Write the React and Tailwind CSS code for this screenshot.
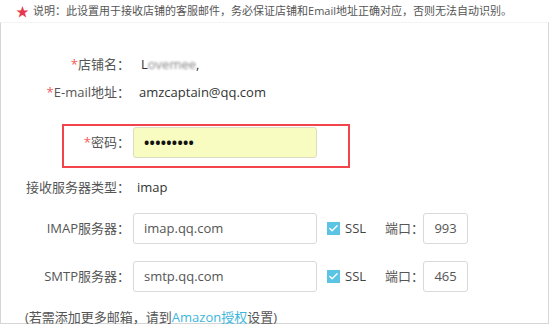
import { Check } from 'lucide-react'

const FONT = { fontFamily: '"Open Sans", "Noto Sans CJK SC", sans-serif' }

function Label({ children, required, width = 'w-[129px]' }) {
  return (
    <div className={`${width} shrink-0 text-right text-[13px] text-[#555] whitespace-nowrap`}>
      {required && <span className="text-[#f35a5a]">*</span>}
      {children}
    </div>
  )
}

function TextBox({ value, className = 'w-[184px]' }) {
  return (
    <div className={`${className} h-[31px] flex items-center px-[10px] border border-[#d9d9d9] rounded-[3px] bg-white text-[13px] text-[#555]`}>
      {value}
    </div>
  )
}

function ServerRow({ label, host, port }) {
  return (
    <div className="flex items-center h-[31px]">
      <Label>{label}</Label>
      <div className="ml-[3px]">
        <TextBox value={host} />
      </div>
      <div className="ml-[10px] w-[13px] h-[13px] bg-[#5bc3e3] flex items-center justify-center">
        <Check size={11} strokeWidth={3} className="text-white" />
      </div>
      <span className="ml-[5px] text-[13px] text-[#444]">SSL</span>
      <span className="ml-[19px] w-[38px] shrink-0 whitespace-nowrap text-[13px] text-[#555]">端口：</span>
      <TextBox value={port} className="w-[45px] justify-center" />
    </div>
  )
}

export default function App() {
  return (
    <div className="w-[549px] h-[326px] bg-white overflow-hidden" style={FONT}>

      {/* notice */}
      <div className="h-[22px] flex items-center pl-[16px] text-[11px] text-[#555] whitespace-nowrap">
        <span className="text-[#e8364a] text-[13px] leading-none mr-[4px]">★</span>
        说明：此设置用于接收店铺的客服邮件，务必保证店铺和Email地址正确对应，否则无法自动识别。
      </div>

      <div className="h-[302px] border-x border-b border-[#d6d6d6] border-t border-t-[#f4f4f4]">

        <div className="mt-[28px] flex items-center h-[28px]">
          <Label required>店铺名：</Label>
          <span className="ml-[11px] text-[13px] text-[#333]">
            L<span className="blur-[1px] text-[#888]">ovemee</span>,
          </span>
        </div>

        <div className="flex items-center h-[28px]">
          <Label required>E-mail地址：</Label>
          <span className="ml-[9px] text-[13px] text-[#333]">amzcaptain@qq.com</span>
        </div>

        {/* highlighted password row */}
        <div className="mt-[17px] ml-[61px] w-[288px] h-[44px] border-2 border-[#f2444a] pt-px">
          <div className="flex items-center h-[31px]">
            <Label required width="w-[66px]">密码：</Label>
            <div className="ml-[3px] w-[184px] h-[31px] flex items-center px-[10px] border border-[#dcdcc0] rounded-[3px] bg-[#f9fcc0] text-[14px] font-bold tracking-[0.3px] text-[#111]">
              •••••••••
            </div>
          </div>
        </div>

        <div className="mt-[6px] flex items-center h-[28px]">
          <Label>接收服务器类型：</Label>
          <span className="ml-[7px] text-[13px] text-[#333]">imap</span>
        </div>

        <div className="mt-[11px] flex flex-col gap-[17px]">
          <ServerRow label="IMAP服务器：" host="imap.qq.com" port="993" />
          <ServerRow label="SMTP服务器：" host="smtp.qq.com" port="465" />
        </div>

        <div className="mt-[16px] pl-[24px] text-[13px] text-[#555]">
          (若需添加更多邮箱，请到<span className="text-[#3cb6dc]">Amazon授权</span>设置)
        </div>

      </div>
    </div>
  )
}
